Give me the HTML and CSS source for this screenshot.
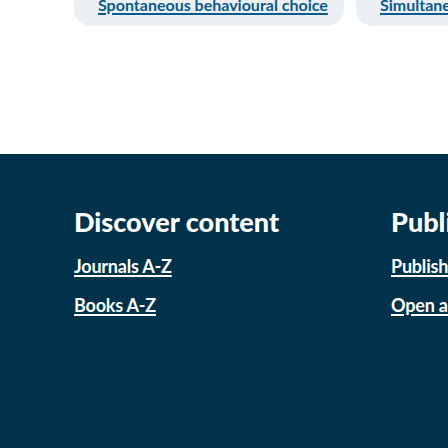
FILE: index.html
```html
<!DOCTYPE html>
<html lang="en">
<head>
<meta charset="utf-8">
<title>Discover content</title>
<link rel="stylesheet" href="styles.css">
</head>
<body>
  <section class="related">
    <div class="card"><a class="card-title" href="#">Spontaneous behavioural choice</a></div>
    <div class="card"><a class="card-title" href="#">Simultaneous recordings</a></div>
  </section>
  <footer class="footer">
    <div class="col">
      <h2 class="col-title">Discover content</h2>
      <ul class="links">
        <li><a href="#">Journals A-Z</a></li>
        <li><a href="#">Books A-Z</a></li>
      </ul>
    </div>
    <div class="col">
      <h2 class="col-title">Publish</h2>
      <ul class="links">
        <li><a href="#">Publish with us</a></li>
        <li><a href="#">Open access</a></li>
      </ul>
    </div>
  </footer>
</body>
</html>
```

FILE: styles.css
```css
html, body {
  margin: 0;
  padding: 0;
  background: #ffffff;
  overflow: hidden;
}

body {
  width: 448px;
  height: 448px;
  font-family: Lato, "Liberation Sans", Arial, sans-serif;
  display: flex;
  flex-direction: column;
}

.related {
  display: flex;
  gap: 12px;
  padding-left: 74px;
  margin-top: -5px;
  height: 159px;
  flex: none;
  overflow: hidden;
}

.card {
  flex: none;
  width: 270px;
  height: 31px;
  box-sizing: border-box;
  padding: 0 24px;
  background: #ebf0f4;
  border-radius: 0 0 17px 17px;
  white-space: nowrap;
  overflow: hidden;
}

.card-title {
  font-weight: 700;
  font-size: 16px;
  line-height: 18px;
  color: #0b5a8c;
  text-decoration: underline;
  text-decoration-thickness: 1.5px;
  text-underline-offset: 2px;
}

.footer {
  flex: 1;
  background: #01324b;
  display: grid;
  grid-template-columns: 301px 301px;
  column-gap: 16px;
  padding: 54px 0 0 74px;
  align-content: start;
  overflow: hidden;
}

.col {
  min-width: 0;
}

.col-title {
  margin: 0;
  font-size: 27px;
  line-height: 28px;
  font-weight: 900;
  color: #ffffff;
  white-space: nowrap;
}

.links {
  list-style: none;
  margin: 19px 0 0;
  padding: 0;
  display: flex;
  flex-direction: column;
  gap: 17px;
}

.links li {
  display: flex;
  height: 22px;
}

.links a {
  font-size: 18px;
  line-height: 22px;
  font-weight: 700;
  color: #ffffff;
  white-space: nowrap;
  text-decoration: underline;
  text-decoration-thickness: 1.5px;
  text-underline-offset: 2px;
  letter-spacing: -0.2px;
}
```
